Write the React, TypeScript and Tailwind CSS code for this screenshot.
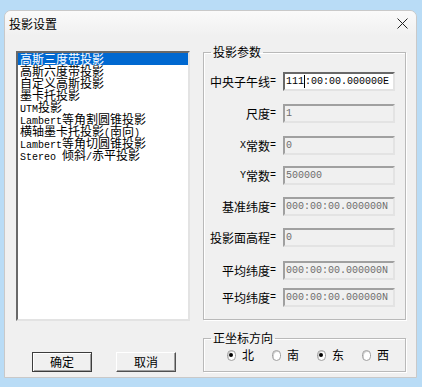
import React from 'react';

const cjk = '"Noto Sans CJK SC", "Liberation Sans", sans-serif';

// SimSun style: ascii half width, cjk full width
function Mixed({ text }: { text: string }) {
  const parts = text.match(/[\x20-\x7e]+|[^\x20-\x7e]+/g) || [];
  return (
    <>
      {parts.map((p, i) =>
        /^[\x20-\x7e]+$/.test(p) ? (
          <span key={i} className="font-['Liberation_Mono',monospace] text-[10px] whitespace-pre">
            {p}
          </span>
        ) : (
          <span key={i}>{p}</span>
        )
      )}
    </>
  );
}

const projections = [
  '高斯三度带投影',
  '高斯六度带投影',
  '自定义高斯投影',
  '墨卡托投影',
  'UTM投影',
  'Lambert等角割圆锥投影',
  '横轴墨卡托投影(南向)',
  'Lambert等角切圆锥投影',
  'Stereo 倾斜/赤平投影',
];

const params = [
  { label: '中央子午线=', value: '111:00:00.000000E', on: true, gap: 'mt-[13px]' },
  { label: '尺度=', value: '1', on: false, gap: 'mt-[13px]' },
  { label: 'X常数=', value: '0', on: false, gap: 'mt-[13px]' },
  { label: 'Y常数=', value: '500000', on: false, gap: 'mt-[11px]' },
  { label: '基准纬度=', value: '000:00:00.000000N', on: false, gap: 'mt-[12px]' },
  { label: '投影面高程=', value: '0', on: false, gap: 'mt-[12px]' },
  { label: '平均纬度=', value: '000:00:00.000000N', on: false, gap: 'mt-[14px]' },
  { label: '平均纬度=', value: '000:00:00.000000N', on: false, gap: 'mt-[8px]' },
];

const dirs = [
  { name: '北', on: true },
  { name: '南', on: false },
  { name: '东', on: true },
  { name: '西', on: false },
];

function Radio({ on }: { on: boolean }) {
  return (
    <span className="w-[11px] h-[11px] rounded-full border border-[#a0a0a0] bg-white shadow-[inset_1px_1px_0_#d0d0d0] flex items-center justify-center">
      {on && <span className="w-[4px] h-[4px] rounded-full bg-black" />}
    </span>
  );
}

export default function App() {
  return (
    <div className="w-[422px] h-[387px] bg-[#b9dcf6] pt-[10px] pl-[4px]" style={{ fontFamily: cjk }}>
      <div className="w-[413px] h-[368px] bg-[#f0f0f0] border border-[#c9c9c9] rounded-t-[7px] flex flex-col overflow-hidden">
        <div className="h-[25px] flex items-center justify-between pl-[4px] pr-[8px] bg-gradient-to-b from-[#fafafa] to-[#f0f0f0]">
          <span className="text-[12px] text-black leading-none">投影设置</span>
          <svg width="11" height="11" viewBox="0 0 11 11">
            <path d="M0.5 0.5L10.5 10.5M10.5 0.5L0.5 10.5" stroke="#222" strokeWidth="1" />
          </svg>
        </div>

        <div className="flex pl-[11px] pt-[9px] gap-[13px] text-[12px] text-black">
          <div className="w-[174px] pt-[6px] flex flex-col">
            <div className="h-[270px] bg-white border-2 border-t-[#696969] border-l-[#696969] border-b-[#e3e3e3] border-r-[#e3e3e3]">
              {projections.map((p, i) => (
                <div
                  key={p}
                  className={
                    'h-[12px] leading-[12px] pl-[2px] whitespace-nowrap ' +
                    (i === 0 ? 'bg-[#0068d0] text-white' : 'text-black')
                  }
                >
                  <Mixed text={p} />
                </div>
              ))}
            </div>
            <div className="flex gap-[24px] pl-[16px] mt-[31px]">
              <button className="w-[60px] h-[20px] border border-[#3c3c3c] bg-[#f0f0f0] shadow-[inset_1px_1px_0_#fff,inset_-1px_-1px_0_#a0a0a0] text-[12px] leading-none">
                确定
              </button>
              <button className="w-[60px] h-[20px] border border-t-white border-l-white border-b-[#505050] border-r-[#505050] bg-[#f0f0f0] shadow-[inset_-1px_-1px_0_#a0a0a0] text-[12px] leading-none">
                取消
              </button>
            </div>
          </div>

          <div className="w-[203px] flex flex-col">
            <fieldset className="h-[275px] border border-[#b9b9b9] shadow-[inset_1px_1px_0_#fff,1px_1px_0_#fff] px-0 m-0">
              <legend className="ml-[7px] px-[2px] text-[12px] leading-[14px]">投影参数</legend>
              {params.map((r, i) => (
                <div key={i} className={'flex items-center h-[19px] ' + r.gap}>
                  <div className="w-[72px] h-[19px] flex items-center justify-end whitespace-nowrap leading-[12px]">
                    <Mixed text={r.label} />
                  </div>
                  <div
                    className={
                      'ml-[7px] w-[112px] h-[19px] border-2 pl-[1px] flex items-center font-["Liberation_Mono",monospace] text-[10px] leading-none whitespace-pre overflow-hidden ' +
                      (r.on
                        ? 'bg-white border-t-[#696969] border-l-[#696969] border-b-[#e3e3e3] border-r-[#e3e3e3] text-black'
                        : 'bg-[#f0f0f0] border-t-[#a0a0a0] border-l-[#a0a0a0] border-b-[#e3e3e3] border-r-[#e3e3e3] text-[#6d6d6d]')
                    }
                  >
                    {r.on ? (
                      <>
                        111<span className="inline-block w-[1px] h-[13px] bg-black" />:00:00.000000E
                      </>
                    ) : (
                      r.value
                    )}
                  </div>
                </div>
              ))}
            </fieldset>

            <fieldset className="mt-[11px] h-[41px] border border-[#b9b9b9] shadow-[inset_1px_1px_0_#fff,1px_1px_0_#fff] px-0 m-0">
              <legend className="ml-[7px] px-[2px] text-[12px] leading-[14px]">正坐标方向</legend>
              <div className="flex pl-[23px] pt-[4px] gap-[18px]">
                {dirs.map((d) => (
                  <div key={d.name} className="flex items-center gap-[6px] w-[27px]">
                    <Radio on={d.on} />
                    <span className="leading-[12px]">{d.name}</span>
                  </div>
                ))}
              </div>
            </fieldset>
          </div>
        </div>
      </div>
    </div>
  );
}
